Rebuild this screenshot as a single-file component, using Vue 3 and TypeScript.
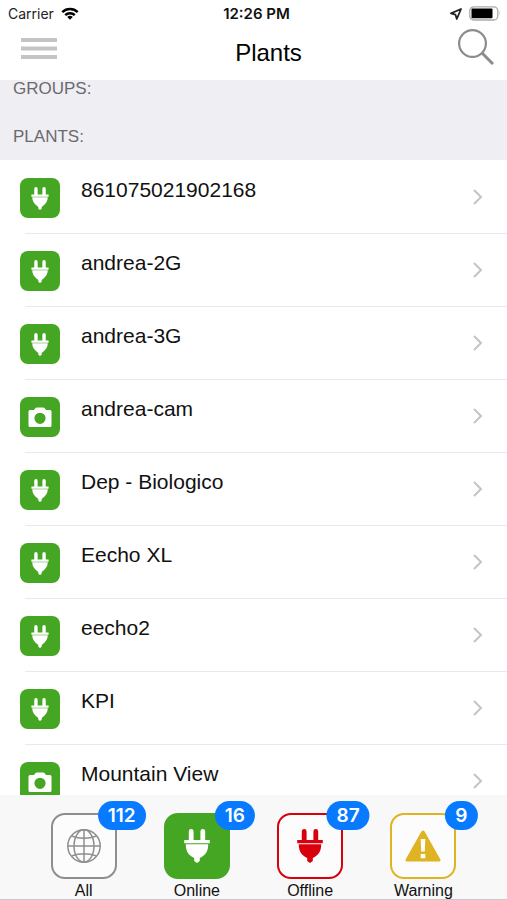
<script setup lang="ts">
import { ref } from 'vue'

type Kind = 'plug' | 'camera'
interface Plant {
  name: string
  kind: Kind
}
interface Tab {
  id: 'all' | 'online' | 'offline' | 'warning'
  label: string
  count: number
}

const plants: Plant[] = [
  { name: '861075021902168', kind: 'plug' },
  { name: 'andrea-2G', kind: 'plug' },
  { name: 'andrea-3G', kind: 'plug' },
  { name: 'andrea-cam', kind: 'camera' },
  { name: 'Dep - Biologico', kind: 'plug' },
  { name: 'Eecho XL', kind: 'plug' },
  { name: 'eecho2', kind: 'plug' },
  { name: 'KPI', kind: 'plug' },
  { name: 'Mountain View', kind: 'camera' },
]

const tabs: Tab[] = [
  { id: 'all', label: 'All', count: 112 },
  { id: 'online', label: 'Online', count: 16 },
  { id: 'offline', label: 'Offline', count: 87 },
  { id: 'warning', label: 'Warning', count: 9 },
]

const active = ref<Tab['id']>('online')
</script>

<template>
  <div class="app">
    <div class="status">
      <div class="carrier">
        <span>Carrier</span>
        <svg width="18" height="14" viewBox="0 0 18 14" fill="none" stroke="#000" stroke-width="2.4">
          <path d="M1.3 5.1a11 11 0 0 1 15.4 0" />
          <path d="M4.2 8.2a6.8 6.8 0 0 1 9.6 0" />
          <path d="M9 12.7 6.2 10a4 4 0 0 1 5.6 0z" fill="#000" stroke="none" />
        </svg>
      </div>
      <span class="time">12:26 PM</span>
      <div class="power">
        <svg width="12" height="12" viewBox="0 0 12 12" fill="none" stroke="#222" stroke-width="1.8" stroke-linejoin="round">
          <path d="M11 1 1 5.400l4.400 1.200L6.800 11z" />
        </svg>
        <svg width="32" height="15" viewBox="0 0 32 15">
          <rect x=".8" y=".8" width="28" height="13.200" rx="4" fill="#fff" stroke="#aaa" stroke-width="1.300" />
          <rect x="2.500" y="2.500" width="21" height="9.800" rx="1" />
          <path d="M30.200 5.200q1.600 2.200 0 4.400z" fill="#aaa" />
        </svg>
      </div>
    </div>

    <header class="nav">
      <button class="icon-button" type="button" aria-label="Menu">
        <svg width="36" height="22" viewBox="0 0 36 22" fill="#c4c4c6">
          <path d="M0 0h36v4H0zM0 8.500h36v4H0zM0 17h36v4H0z" />
        </svg>
      </button>
      <h1>Plants</h1>
      <button class="icon-button" type="button" aria-label="Search">
        <svg width="36" height="36" viewBox="0 0 36 36" fill="none" stroke="#8c8c8e">
          <circle cx="14.500" cy="14.500" r="13.400" stroke-width="2.200" />
          <path d="M24 24 35 35" stroke-width="3" />
        </svg>
      </button>
    </header>

    <main class="content">
      <div class="sections">
        <h2>GROUPS:</h2>
        <h2>PLANTS:</h2>
      </div>
      <ul class="plants">
        <li v-for="plant in plants" :key="plant.name">
          <a class="plant" href="#">
            <span class="tile">
              <svg v-if="plant.kind === 'plug'" width="18" height="23" viewBox="0 0 26 34" fill="currentColor">
                <path d="M4.500 11V2.500a2.500 2.500 0 0 1 5 0V11h7V2.500a2.500 2.500 0 0 1 5 0V11h4.200v3.400H.3V11zM1.500 15.200h23c0 6-3 9.500-9 14.400v2.600L13 34l-2.500-1.800v-2.600C4.500 24.700 1.500 21.200 1.500 15.200z" />
              </svg>
              <svg v-else width="24" height="21" viewBox="0 0 24 21" fill="currentColor" fill-rule="evenodd">
                <path d="M2 3h4l1.500-2Q8 .5 9 .5h6q1 0 1.500.5L18 3h4q1.500 0 1.500 1.500v14Q23.500 20 22 20H2Q.5 20 .5 18.500v-14Q.5 3 2 3zM12 5.700a5.600 5.600 0 1 0 0 11.200 5.600 5.600 0 0 0 0-11.200z" />
              </svg>
            </span>
            <span class="name">{{ plant.name }}</span>
            <svg class="chevron" width="10" height="16" viewBox="0 0 10 16" fill="none" stroke="#c4c4c8" stroke-width="2">
              <path d="M1 1l7 7-7 7" />
            </svg>
          </a>
        </li>
      </ul>
    </main>

    <nav class="tabs">
      <button
        v-for="tab in tabs"
        :key="tab.id"
        type="button"
        class="tab"
        :class="[tab.id, { active: tab.id === active }]"
        @click="active = tab.id"
      >
        <span class="box">
          <svg v-if="tab.id === 'all'" width="34" height="34" viewBox="0 0 34 34" fill="none" stroke="currentColor" stroke-width="1.500">
            <circle cx="17" cy="17" r="16.200" />
            <ellipse cx="17" cy="17" rx="10" ry="16.200" />
            <path d="M17 1v32M1 17h32M4.500 7q12.500 4.500 25 0M4.500 27q12.500-4.500 25 0" />
          </svg>
          <svg v-else-if="tab.id === 'warning'" width="36" height="32" viewBox="0 0 36 32" fill="currentColor">
            <path d="M18 .5q1 0 1.600 1.100l15.800 28Q36 31.500 34.500 31.500h-33Q0 31.500.6 29.600l15.800-28Q17 .5 18 .5z" />
            <path d="M15.700 9h4.600l-.5 12.500h-3.600zM15.700 24h4.600v4.300h-4.600z" fill="#fff" />
          </svg>
          <svg v-else width="26" height="34" viewBox="0 0 26 34" fill="currentColor">
            <path d="M4.800 11V2.400a2.400 2.400 0 0 1 4.800 0V11h6.800V2.400a2.400 2.400 0 0 1 4.800 0V11h4.600v3.200H.2V11zM1.800 15.300h22.400c0 7.500-3 11.200-8.400 13.600v3.200L13 34l-2.800-1.900v-3.200C4.800 26.500 1.800 22.800 1.800 15.300z" />
          </svg>
          <span class="badge">{{ tab.count }}</span>
        </span>
        <span class="label">{{ tab.label }}</span>
      </button>
    </nav>
  </div>
</template>

<style>
body {
  margin: 0;
}
</style>

<style scoped>
.app {
  display: flex;
  flex-direction: column;
  height: 100vh;
  background: #fff;
  color: #111;
  font-family: "Liberation Sans", Arial, sans-serif;
}
.status {
  display: grid;
  grid-template-columns: 1fr auto 1fr;
  align-items: center;
  height: 27px;
  padding: 0 6px 0 8px;
  font: 14px/27px Inter, sans-serif;
  color: #222;
}
.carrier,
.power {
  display: flex;
  align-items: center;
  gap: 7px;
}
.power {
  justify-content: flex-end;
}
.time {
  padding-left: 4px;
  font-size: 15px;
  font-weight: 600;
  color: #111;
}
.nav {
  display: grid;
  grid-template-columns: 1fr auto 1fr;
  height: 53px;
  padding: 0 13px 0 21px;
}
.icon-button {
  display: flex;
  align-items: flex-start;
  justify-self: start;
  padding: 11px 0 0;
  border: 0;
  background: none;
}
.icon-button:last-child {
  justify-self: end;
  padding-top: 2px;
}
h1 {
  margin: 0;
  padding-left: 22px;
  font-size: 24px;
  line-height: 52px;
  font-weight: 400;
  color: #000;
}
.content {
  flex: 1;
  min-height: 0;
  overflow: auto;
  scrollbar-width: none;
}
.sections {
  padding: 0 13px 7px;
  background: #efeef3;
}
h2 {
  margin: 0;
  font-size: 17px;
  line-height: 32px;
  font-weight: 400;
  color: #6a6a6e;
}
h2:first-child {
  padding-bottom: 23px;
  line-height: 18px;
}
.plants {
  margin: 0;
  padding: 1px 0 0;
  list-style: none;
}
.plant {
  display: flex;
  align-items: flex-start;
  gap: 21px;
  height: 72px;
  padding: 0 24px 0 20px;
  color: inherit;
  text-decoration: none;
}
li::after {
  content: "";
  display: block;
  height: 1px;
  margin-left: 25px;
  background: #e9e9eb;
}
.tile {
  display: grid;
  place-items: center;
  width: 40px;
  height: 40px;
  margin-top: 17px;
  border-radius: 8px;
  background: #45a623;
  color: #fff;
}
.name {
  flex: 1;
  padding-top: 17px;
  font-size: 21px;
  line-height: 24px;
}
.chevron {
  align-self: center;
}
.tabs {
  display: grid;
  grid-template-columns: repeat(4, 1fr);
  padding: 18px 27px 0;
  border-bottom: 1px solid #c8c8ca;
  background: #f8f8f8;
}
.tab {
  display: flex;
  flex-direction: column;
  align-items: center;
  padding: 0;
  border: 0;
  background: none;
  font: inherit;
}
.box {
  position: relative;
  display: grid;
  place-items: center;
  box-sizing: border-box;
  width: 66px;
  height: 66px;
  border: 2px solid currentColor;
  border-radius: 14px;
  background: #fcfcfc;
}
.all {
  color: #8e8e90;
}
.online {
  color: #45a623;
}
.offline {
  color: #d8000c;
}
.warning {
  color: #e0b322;
}
.online .box {
  border-color: #45a623;
  background: #45a623;
  color: #fff;
}
.badge {
  position: absolute;
  top: -14px;
  left: 69px;
  box-sizing: border-box;
  min-width: 30px;
  padding: 0 10px;
  border-radius: 15px;
  transform: translateX(-50%);
  background: #087aff;
  color: #fff;
  font: 600 19px/29px Inter, sans-serif;
}
.label {
  padding-top: 4px;
  font-size: 16px;
  line-height: 16px;
  color: #111;
}
</style>
